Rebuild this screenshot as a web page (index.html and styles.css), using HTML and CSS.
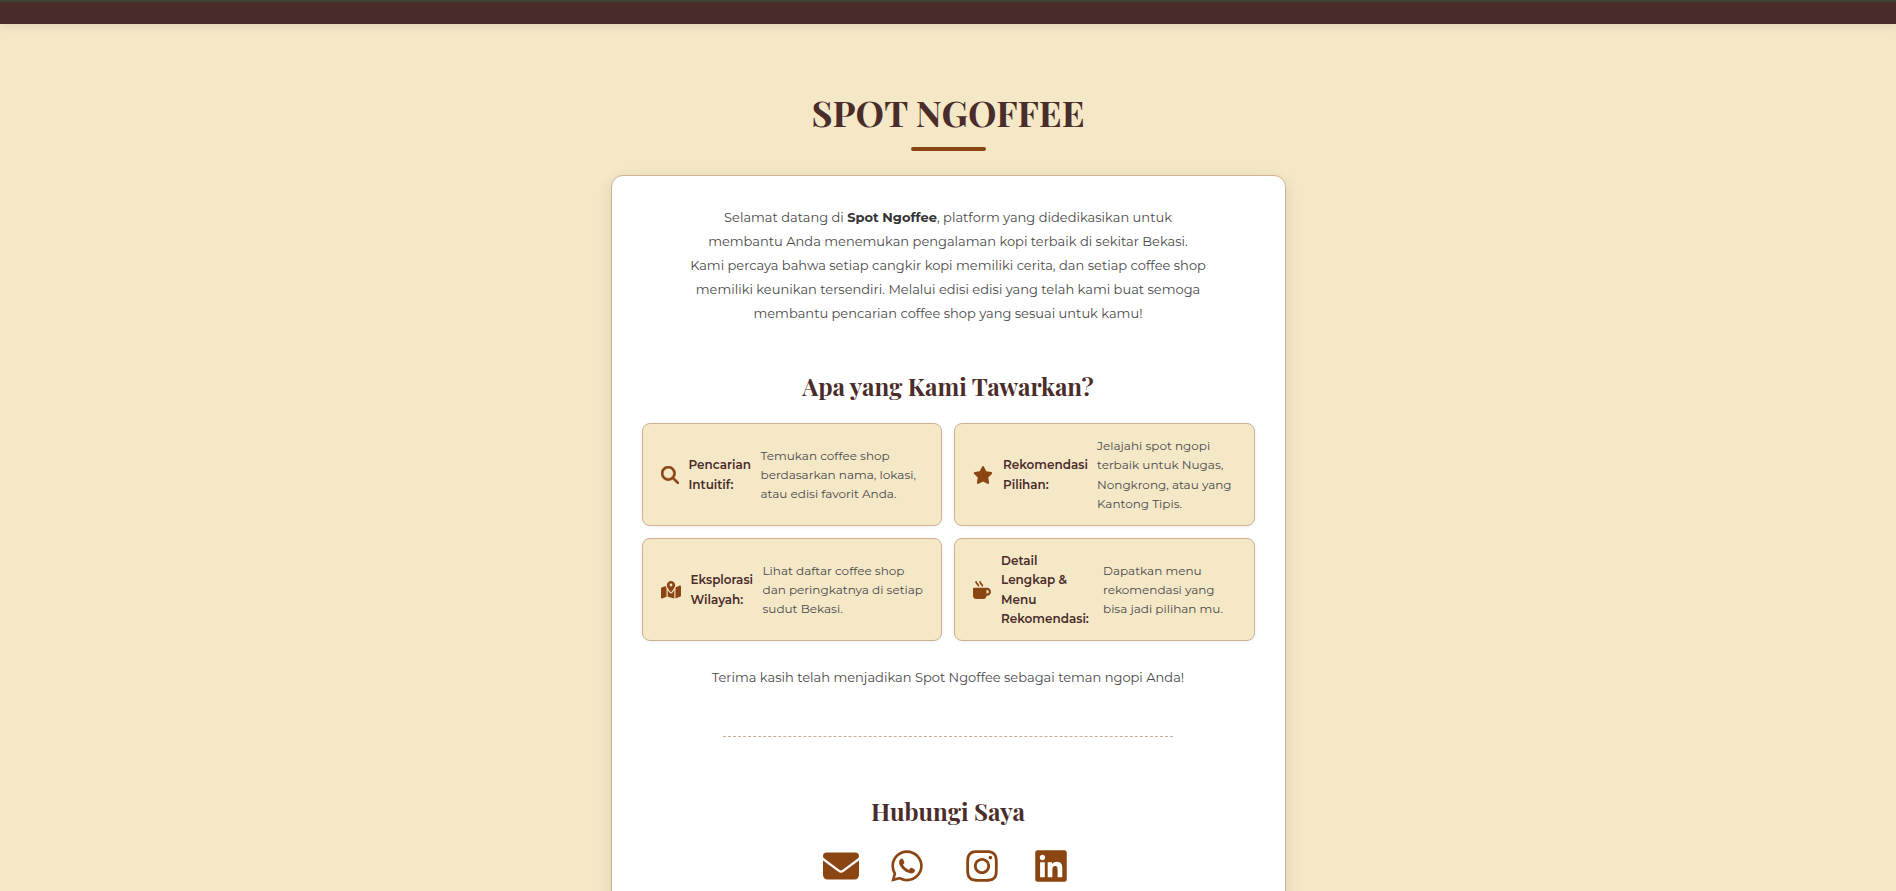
FILE: index.html
```html
<!DOCTYPE html>
<html lang="id">
<head>
<meta charset="utf-8">
<meta name="viewport" content="width=device-width, initial-scale=1">
<title>Spot Ngoffee</title>
<link rel="stylesheet" href="styles.css">
</head>
<body>
<header class="topbar"></header>
<main class="page">
  <h1 class="page-title">SPOT NGOFFEE</h1>
  <section class="card">
    <p class="intro">Selamat datang di <strong>Spot Ngoffee</strong>, platform yang didedikasikan untuk<br>
      membantu Anda menemukan pengalaman kopi terbaik di sekitar Bekasi.<br>
      Kami percaya bahwa setiap cangkir kopi memiliki cerita, dan setiap coffee shop<br>
      memiliki keunikan tersendiri. Melalui edisi edisi yang telah kami buat semoga<br>
      membantu pencarian coffee shop yang sesuai untuk kamu!</p>

    <h2 class="section-title">Apa yang Kami Tawarkan?</h2>
    <ul class="features">
      <li class="feature">
        <svg class="feature-icon feature-icon-search" viewBox="0 0 512 512" aria-hidden="true"><path d="M416 208c0 45.9-14.9 88.3-40 122.7L502.6 457.4c12.5 12.5 12.5 32.8 0 45.3s-32.8 12.5-45.3 0L330.7 376c-34.4 25.2-76.8 40-122.7 40C93.1 416 0 322.9 0 208S93.1 0 208 0S416 93.1 416 208zM208 352a144 144 0 1 0 0-288 144 144 0 1 0 0 288z"/></svg>
        <strong class="feature-name">Pencarian<br>Intuitif:</strong>
        <span>Temukan coffee shop<br>berdasarkan nama, lokasi,<br>atau edisi favorit Anda.</span>
      </li>
      <li class="feature">
        <svg class="feature-icon feature-icon-wide" viewBox="0 0 576 512" aria-hidden="true"><path d="M316.9 18C311.6 7 300.4 0 288.1 0s-23.4 7-28.8 18L195 150.3 51.4 171.5c-12 1.8-22 10.2-25.7 21.7s-.7 24.2 7.9 32.7L137.8 329 113.2 474.7c-2 12 3 24.2 12.9 31.3s23 8 33.8 2.3l128.3-68.5 128.3 68.5c10.8 5.7 23.9 4.9 33.8-2.3s14.9-19.3 12.9-31.3L438.5 329 542.7 225.9c8.6-8.5 11.7-21.2 7.9-32.7s-13.7-19.9-25.7-21.7L381.2 150.3 316.9 18z"/></svg>
        <strong class="feature-name feature-name-long">Rekomendasi<br>Pilihan:</strong>
        <span>Jelajahi spot ngopi<br>terbaik untuk Nugas,<br>Nongkrong, atau yang<br>Kantong Tipis.</span>
      </li>
      <li class="feature">
        <svg class="feature-icon feature-icon-wide" viewBox="0 0 576 512" aria-hidden="true"><path d="M408 120c0 54.6-73.1 151.9-105.2 192c-7.7 9.6-22 9.6-29.6 0C241.1 271.9 168 174.6 168 120C168 53.7 221.7 0 288 0s120 53.7 120 120zm8 80.4c3.5-6.9 6.7-13.8 9.6-20.6c.5-1.2 1-2.5 1.5-3.7l116-46.4C558.9 123.4 576 135 576 152V422.8c0 9.8-6 18.6-15.1 22.3L416 503V200.4zM137.6 138.3c2.4 14.1 7.2 28.3 12.8 41.5c2.9 6.8 6.1 13.7 9.6 20.6V451.8L32.9 502.7C17.1 509 0 497.4 0 480.4V209.6c0-9.8 6-18.6 15.1-22.3l122.6-49zM327.8 332c13.9-17.4 35.7-45.7 56.2-77V504.3L192 449.4V255c20.5 31.3 42.3 59.6 56.2 77c20.5 25.6 59.1 25.6 79.6 0zM288 152a40 40 0 1 0 0-80 40 40 0 1 0 0 80z"/></svg>
        <strong class="feature-name">Eksplorasi<br>Wilayah:</strong>
        <span>Lihat daftar coffee shop<br>dan peringkatnya di setiap<br>sudut Bekasi.</span>
      </li>
      <li class="feature">
        <svg class="feature-icon" viewBox="0 0 512 512" aria-hidden="true"><path d="M88 0C74.7 0 64 10.7 64 24c0 38.9 23.4 59.4 39.1 73.1l1.1 1C120.5 112.3 128 119.9 128 136c0 13.3 10.7 24 24 24s24-10.7 24-24c0-38.9-23.4-59.4-39.1-73.1l-1.1-1C119.5 47.7 112 40.1 112 24c0-13.3-10.7-24-24-24zM32 192c-17.7 0-32 14.3-32 32V416c0 53 43 96 96 96H288c53 0 96-43 96-96h16c61.9 0 112-50.1 112-112s-50.1-112-112-112H352 32zm352 64h16c26.5 0 48 21.5 48 48s-21.5 48-48 48H384V256zM224 24c0-13.3-10.7-24-24-24s-24 10.7-24 24c0 38.9 23.4 59.4 39.1 73.1l1.1 1C232.5 112.3 240 119.9 240 136c0 13.3 10.7 24 24 24s24-10.7 24-24c0-38.9-23.4-59.4-39.1-73.1l-1.1-1C231.5 47.7 224 40.1 224 24z"/></svg>
        <strong class="feature-name feature-name-longest">Detail<br>Lengkap &amp;<br>Menu<br>Rekomendasi:</strong>
        <span>Dapatkan menu<br>rekomendasi yang<br>bisa jadi pilihan mu.</span>
      </li>
    </ul>

    <p class="thanks">Terima kasih telah menjadikan Spot Ngoffee sebagai teman ngopi Anda!</p>
    <hr class="divider">

    <h2 class="section-title">Hubungi Saya</h2>
    <nav class="contacts">
      <a class="contact contact-email" href="#email" aria-label="Email"><svg class="contact-icon" viewBox="0 0 512 512"><path d="M48 64C21.5 64 0 85.5 0 112c0 15.1 7.1 29.3 19.2 38.4L236.8 313.6c11.4 8.5 27 8.5 38.4 0L492.8 150.4c12.1-9.1 19.2-23.3 19.2-38.4c0-26.5-21.5-48-48-48H48zM0 176V384c0 35.3 28.7 64 64 64H448c35.3 0 64-28.7 64-64V176L294.4 339.2c-22.8 17.1-54 17.1-76.8 0L0 176z"/></svg></a>
      <a class="contact contact-whatsapp" href="#whatsapp" aria-label="WhatsApp"><svg class="contact-icon" viewBox="-32 0 512 512"><path d="M380.9 97.1C339 55.1 283.2 32 223.9 32c-122.4 0-222 99.6-222 222 0 39.1 10.2 77.3 29.6 111L0 480l117.7-30.9c32.4 17.7 68.9 27 106.1 27h.1c122.3 0 224.1-99.6 224.1-222 0-59.3-25.2-115-67.1-157zm-157 341.6c-33.2 0-65.7-8.9-94-25.7l-6.7-4-69.8 18.3L72 359.2l-4.4-7c-18.5-29.4-28.2-63.3-28.2-98.2 0-101.7 82.8-184.5 184.6-184.5 49.3 0 95.6 19.2 130.4 54.1 34.8 34.9 56.2 81.2 56.1 130.5 0 101.8-84.9 184.6-186.6 184.6zm101.2-138.2c-5.5-2.8-32.8-16.2-37.9-18-5.1-1.9-8.8-2.8-12.5 2.8-3.7 5.6-14.3 18-17.6 21.8-3.2 3.7-6.5 4.2-12 1.4-32.6-16.3-54-29.1-75.5-66-5.7-9.8 5.7-9.1 16.3-30.3 1.8-3.7.9-6.9-.5-9.7-1.4-2.8-12.5-30.1-17.1-41.2-4.5-10.8-9.1-9.3-12.5-9.5-3.2-.2-6.9-.2-10.6-.2-3.7 0-9.7 1.4-14.8 6.9-5.1 5.6-19.4 19-19.4 46.3 0 27.3 19.9 53.7 22.6 57.4 2.8 3.7 39.1 59.7 94.8 83.8 35.2 15.2 49 16.5 66.6 13.9 10.7-1.6 32.8-13.4 37.4-26.4 4.6-13 4.6-24.1 3.2-26.4-1.3-2.5-5-3.9-10.5-6.6z"/></svg></a>
      <a class="contact contact-instagram" href="#instagram" aria-label="Instagram"><svg class="contact-icon" viewBox="-32 0 512 512"><path d="M224.1 141c-63.6 0-114.9 51.3-114.9 114.9s51.3 114.9 114.9 114.9S339 319.5 339 255.9 287.7 141 224.1 141zm0 189.6c-41.1 0-74.7-33.5-74.7-74.7s33.5-74.7 74.7-74.7 74.7 33.5 74.7 74.7-33.6 74.7-74.7 74.7zm146.4-194.3c0 14.9-12 26.8-26.8 26.8-14.9 0-26.8-12-26.8-26.8s12-26.8 26.8-26.8 26.8 12 26.8 26.8zm76.1 27.2c-1.7-35.9-9.9-67.7-36.2-93.9-26.2-26.2-58-34.4-93.9-36.2-37-2.1-147.9-2.1-184.9 0-35.8 1.7-67.6 9.9-93.9 36.1s-34.4 58-36.2 93.9c-2.1 37-2.1 147.9 0 184.9 1.7 35.9 9.9 67.7 36.2 93.9s58 34.4 93.9 36.2c37 2.1 147.9 2.1 184.9 0 35.9-1.7 67.7-9.9 93.9-36.2 26.2-26.2 34.4-58 36.2-93.9 2.1-37 2.1-147.8 0-184.8zM398.8 388c-7.8 19.6-22.9 34.7-42.6 42.6-29.5 11.7-99.5 9-132.1 9s-102.7 2.6-132.1-9c-19.6-7.8-34.7-22.9-42.6-42.6-11.7-29.5-9-99.5-9-132.1s-2.6-102.7 9-132.1c7.8-19.6 22.9-34.7 42.6-42.6 29.5-11.7 99.5-9 132.1-9s102.7-2.6 132.1 9c19.6 7.8 34.7 22.9 42.6 42.6 11.7 29.5 9 99.5 9 132.1s2.7 102.7-9 132.1z"/></svg></a>
      <a class="contact contact-linkedin" href="#linkedin" aria-label="LinkedIn"><svg class="contact-icon" viewBox="-32 0 512 512"><path d="M416 32H31.9C14.3 32 0 46.5 0 64.3v383.4C0 465.5 14.3 480 31.9 480H416c17.6 0 32-14.5 32-32.3V64.3c0-17.8-14.4-32.3-32-32.3zM135.4 416H69V202.2h66.5V416zm-33.2-243c-21.3 0-38.5-17.3-38.5-38.5S80.9 96 102.2 96c21.2 0 38.5 17.3 38.5 38.5 0 21.3-17.2 38.5-38.5 38.5zm282.1 243h-66.4V312c0-24.8-.5-56.7-34.5-56.7-34.6 0-39.9 27-39.9 54.9V416h-66.4V202.2h63.7v29.2h.9c8.9-16.8 30.6-34.5 62.9-34.5 67.2 0 79.7 44.3 79.7 81.9V416z"/></svg></a>
    </nav>
  </section>
</main>
</body>
</html>
```
FILE: styles.css
```css
* {
  box-sizing: border-box;
}

body {
  margin: 0;
  background: #f5e8c7;
  color: #4a4a4a;
  font-family: Montserrat, Inter, sans-serif;
  font-size: 13px;
  font-weight: 400;
}

.topbar {
  height: 24px;
  background: #4a2c2a;
  border-top: 2px solid #3c4232;
  box-shadow: 0 2px 10px rgba(0, 0, 0, 0.1);
}

.page {
  max-width: 675px;
  margin: 0 auto;
  padding: 62px 0 40px;
}

.page-title {
  display: flex;
  flex-direction: column;
  align-items: center;
  gap: 9px;
  margin: 0 0 24px;
  color: #4a2c2a;
  font-family: "Playfair Display", "Liberation Serif", serif;
  font-size: 36px;
  line-height: 52px;
}

.page-title::after {
  content: "";
  width: 75px;
  height: 4px;
  border-radius: 2px;
  background: #8b4513;
}

.card {
  padding: 29px 30px;
  background: #fff;
  border: 1px solid #cdb391;
  border-radius: 12px;
  box-shadow: 0 4px 15px rgba(0, 0, 0, 0.1);
}

.intro,
.thanks {
  margin: 0;
  text-align: center;
  line-height: 24px;
}

.intro strong {
  color: #333;
  font-weight: 700;
}

.section-title {
  margin: 0 0 19px;
  color: #4a2c2a;
  text-align: center;
  font-family: "Playfair Display", "Liberation Serif", serif;
  font-size: 24px;
  line-height: 36px;
}

.intro + .section-title {
  margin-top: 43px;
}

.features {
  display: grid;
  grid-template-columns: 1fr 1fr;
  gap: 12px;
  margin: 0 0 24px;
  padding: 0;
  list-style: none;
}

.feature {
  display: flex;
  align-items: center;
  gap: 10px;
  min-height: 103px;
  padding: 12px 18px;
  background: #f5e8c7;
  border: 1px solid #cdb391;
  border-radius: 8px;
  box-shadow: 0 1px 4px rgba(0, 0, 0, 0.06);
  font-size: 12px;
  line-height: 1.6;
  white-space: nowrap;
}

.feature-icon {
  flex: none;
  width: 18px;
  height: 18px;
  fill: #8b4513;
}

.feature-icon-wide {
  width: 20px;
}

.feature-icon-search {
  stroke: #8b4513;
  stroke-width: 14;
}

.feature-name {
  flex: none;
  width: 62px;
  color: #4a2c2a;
  font-weight: 600;
}

.feature-name-long {
  width: 84px;
}

.feature-name-longest {
  width: 92px;
}

.divider {
  width: 450px;
  max-width: 100%;
  margin: 47px auto 56px;
  border: 0;
  border-top: 1px dashed #c4b09a;
}

.contacts {
  display: flex;
  justify-content: center;
  gap: 12px;
}

.contact {
  display: flex;
  justify-content: center;
}

.contact-email {
  width: 43px;
}

.contact-whatsapp {
  width: 65px;
}

.contact-instagram {
  width: 62px;
}

.contact-linkedin {
  width: 52px;
}

.contact-icon {
  width: 36px;
  height: 36px;
  fill: #8b4513;
}
```
